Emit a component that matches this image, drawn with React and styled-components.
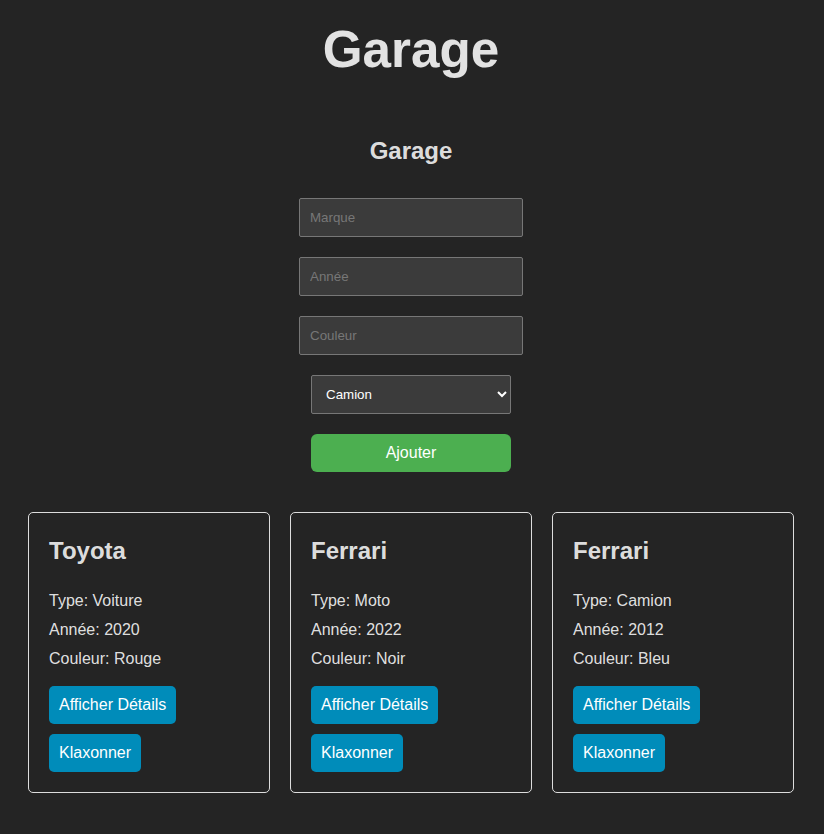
import React from "react";
import styled, { createGlobalStyle } from "styled-components";

const Global = createGlobalStyle`
  html, body { margin: 0; padding: 0; }
  body {
    background: #242424;
    color: rgba(255, 255, 255, 0.87);
    font-family: "Liberation Sans", Arial, sans-serif;
  }
`;

const Page = styled.div`
  padding: 22px 2px 41px 0;
`;

const Title = styled.h1`
  margin: 0;
  font-size: 51.2px;
  line-height: 1.1;
  text-align: center;
  font-weight: bold;
`;

const Form = styled.section`
  display: flex;
  flex-direction: column;
  align-items: center;
  margin-top: 59px;
`;

const FormTitle = styled.h2`
  margin: 0 0 33px;
  font-size: 24px;
  line-height: 28px;
`;

const Input = styled.input`
  box-sizing: border-box;
  width: 224px;
  height: 39px;
  padding: 10px;
  margin-bottom: 20px;
  background: #3b3b3b;
  border: 1px solid #777;
  border-radius: 2px;
  color: #fff;
  font-family: "Liberation Sans", Arial, sans-serif;
  font-size: 13.33px;
  outline: none;
  &::placeholder { color: #777; }
`;

const Select = styled.select`
  box-sizing: border-box;
  width: 200px;
  height: 39px;
  padding: 0 10px;
  margin-bottom: 20px;
  background: #3b3b3b;
  border: 1px solid #777;
  border-radius: 2px;
  color: #fff;
  font-family: "Liberation Sans", Arial, sans-serif;
  font-size: 13.33px;
`;

const AddButton = styled.button`
  box-sizing: border-box;
  width: 200px;
  height: 38px;
  border: none;
  border-radius: 6px;
  background: #4caf50;
  color: #fff;
  font-family: "Liberation Sans", Arial, sans-serif;
  font-size: 16px;
`;

const Cards = styled.div`
  display: flex;
  flex-wrap: wrap;
  justify-content: center;
  gap: 20px;
  margin-top: 40px;
`;

const Card = styled.div`
  box-sizing: border-box;
  width: 242px;
  border: 1px solid #ddd;
  border-radius: 5px;
  padding: 20px;
  display: flex;
  flex-direction: column;
  align-items: flex-start;
`;

const CardTitle = styled.h2`
  margin: 4px 0 27px;
  font-size: 24px;
  line-height: 28px;
`;

const Info = styled.p`
  margin: 0 0 11px;
  font-size: 16px;
  line-height: 18px;
`;

const ActionButton = styled.button`
  margin-top: ${(p) => (p.$first ? "7px" : "10px")};
  padding: 10px;
  border: none;
  border-radius: 5px;
  background: #008cba;
  color: #fff;
  font-family: "Liberation Sans", Arial, sans-serif;
  font-size: 16px;
  line-height: 18px;
`;

const vehicles = [
  { brand: "Toyota", type: "Voiture", year: 2020, color: "Rouge" },
  { brand: "Ferrari", type: "Moto", year: 2022, color: "Noir" },
  { brand: "Ferrari", type: "Camion", year: 2012, color: "Bleu" },
];

export default function App() {
  return (
    <>
      <Global />
      <Page>
        <Title>Garage</Title>
        <Form>
          <FormTitle>Garage</FormTitle>
          <Input placeholder="Marque" />
          <Input placeholder="Année" />
          <Input placeholder="Couleur" />
          <Select defaultValue="Camion">
            <option>Voiture</option>
            <option>Moto</option>
            <option>Camion</option>
          </Select>
          <AddButton>Ajouter</AddButton>
        </Form>
        <Cards>
          {vehicles.map((v, i) => (
            <Card key={i}>
              <CardTitle>{v.brand}</CardTitle>
              <Info>Type: {v.type}</Info>
              <Info>Année: {v.year}</Info>
              <Info>Couleur: {v.color}</Info>
              <ActionButton $first>Afficher Détails</ActionButton>
              <ActionButton>Klaxonner</ActionButton>
            </Card>
          ))}
        </Cards>
      </Page>
    </>
  );
}
